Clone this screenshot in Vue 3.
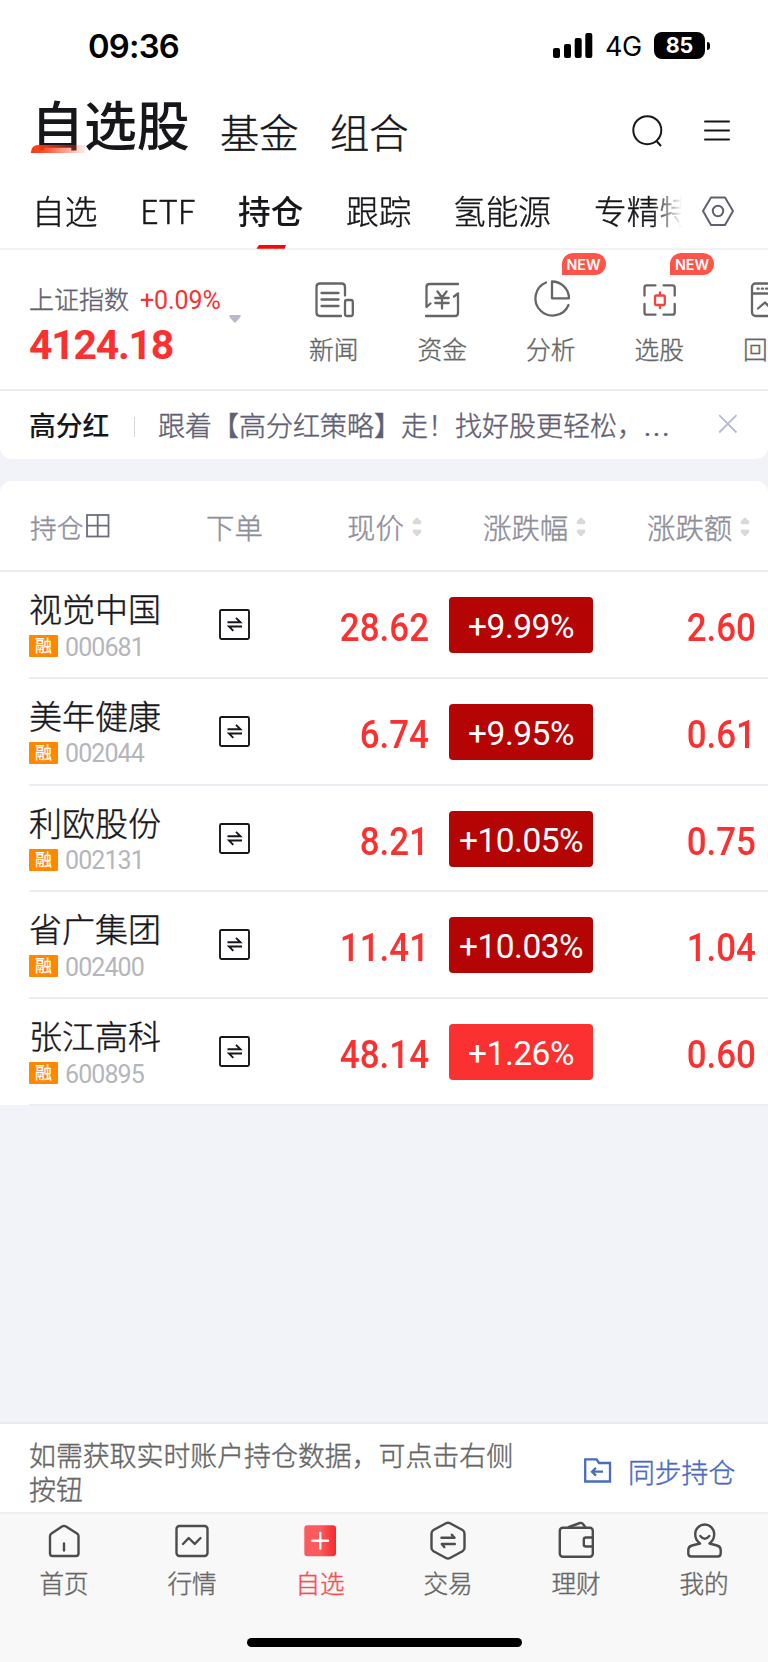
<script setup>
const tabs = [
  { name: '自选', w: 108 },
  { name: 'ETF', w: 98 },
  { name: '持仓', w: 108, active: true },
  { name: '跟踪', w: 107 },
  { name: '氢能源', w: 141 },
  { name: '专精特', w: 140 },
]
const tools = [
  { name: '新闻', icon: 'news' },
  { name: '资金', icon: 'fund' },
  { name: '分析', icon: 'pie', isNew: true },
  { name: '选股', icon: 'pick', isNew: true },
  { name: '回测', icon: 'test' },
]
const stocks = [
  { name: '视觉中国', code: '000681', price: '28.62', pct: '+9.99%', chg: '2.60', limit: true },
  { name: '美年健康', code: '002044', price: '6.74', pct: '+9.95%', chg: '0.61', limit: true },
  { name: '利欧股份', code: '002131', price: '8.21', pct: '+10.05%', chg: '0.75', limit: true },
  { name: '省广集团', code: '002400', price: '11.41', pct: '+10.03%', chg: '1.04', limit: true },
  { name: '张江高科', code: '600895', price: '48.14', pct: '+1.26%', chg: '0.60', limit: false },
]
const nav = [
  { name: '首页', icon: 'home' },
  { name: '行情', icon: 'market' },
  { name: '自选', icon: 'watch', active: true },
  { name: '交易', icon: 'trade' },
  { name: '理财', icon: 'wallet' },
  { name: '我的', icon: 'me' },
]
</script>

<template>
  <div class="page">
    <div class="status">
      <span class="time">09:36</span>
      <svg class="signal" width="40" height="26" viewBox="0 0 40 26">
        <rect x="0" y="15" width="7" height="10" rx="2" />
        <rect x="11" y="11" width="7" height="14" rx="2" />
        <rect x="21.7" y="5" width="7" height="20" rx="2" />
        <rect x="32.3" y="0" width="7" height="25" rx="2" />
      </svg>
      <span class="net">4G</span>
      <span class="battery">85</span>
      <span class="nub"></span>
    </div>

    <header class="head">
      <div class="title"><span class="swash"></span>自选股</div>
      <div class="sub thin">基金</div>
      <div class="sub thin">组合</div>
      <svg class="search" width="34" height="36" viewBox="630 113 34 36" fill="none" stroke="#17171b" stroke-width="2">
        <circle cx="647.3" cy="130.2" r="14" />
        <path d="M656.5 141l4.5 5" />
      </svg>
      <svg width="28" height="24" viewBox="703 119 28 24" stroke="#17171b" stroke-width="2" stroke-linecap="round">
        <path d="M705 121.5h24M705 130.5h24M705 139.5h24" />
      </svg>
    </header>

    <div class="tabs">
      <div class="tablist">
        <div v-for="t in tabs" :key="t.name" class="tab thin" :class="{ on: t.active }" :style="{ width: t.w + 'px' }">
          <span>{{ t.name }}</span>
          <svg v-if="t.active" class="ind" width="30" height="4" viewBox="0 0 30 4"><path d="M3 0H30L28.5 3.7H0.5Z" fill="#fb0505" /></svg>
        </div>
      </div>
      <svg width="34" height="32" viewBox="701 195 34 32" fill="none" stroke="#5f6173" stroke-width="2" stroke-linejoin="round">
        <path d="M711 197.5h14l8 13.5-8 14h-14l-8-14z" />
        <circle cx="718" cy="211" r="5.2" />
      </svg>
    </div>

    <div class="market">
      <div class="index">
        <div class="idx-top"><span class="idx-name thin">上证指数</span><span class="idx-pct">+0.09%</span></div>
        <div class="idx-val">4124.18</div>
      </div>
      <svg class="caret" width="14" height="10" viewBox="0 0 14 10"><path d="M2 1H12Q13.500 1.500 12.500 3L8.200 8Q7 9.200 5.800 8L1.500 3Q0.500 1.500 2 1Z" fill="#b9bacb" /></svg>
      <div class="tools">
        <div v-for="t in tools" :key="t.name" class="tool">
          <span v-if="t.isNew" class="new">NEW</span>
          <svg v-if="t.icon === 'news'" width="44" height="40" viewBox="312 280 44 40">
            <path d="M345 295.500V287Q345 283.500 341.500 283.500H320Q316.500 283.500 316.500 287V312.500Q316.500 316 320 316H341" />
            <path d="M321.500 293H338.500M321.500 299.500H338.500M321.500 306H338.500" />
            <rect x="345" y="300" width="7.800" height="16" rx="2" />
          </svg>
          <svg v-else-if="t.icon === 'fund'" width="44" height="40" viewBox="420.500 280 44 40">
            <path d="M458.500 284H430Q427 284 427 287V307L431 303.500M426.500 316H455.500Q458.500 316 458.500 313V293.500L454.500 296.500" />
            <path d="M438 291.500L442.500 297.500L447 291.500M435.800 298H449.200M435.800 303H449.200M442.500 297.500V308.500" />
          </svg>
          <svg v-else-if="t.icon === 'pie'" width="44" height="40" viewBox="528.500 280 44 40">
            <path d="M545.500 282.500A17.200 17.200 0 1 0 568 305M551.500 281.500V298.300H568.500A17 17 0 0 0 551.500 281.500Z" />
          </svg>
          <svg v-else-if="t.icon === 'pick'" width="44" height="40" viewBox="637.500 280 44 40">
            <path d="M645 295.500V287.500Q645 285.300 647.200 285.300H656M664 285.300H673Q675.200 285.300 675.200 287.500V295.500M675.200 304V312.500Q675.200 314.700 673 314.700H664M656 314.700H647.200Q645 314.700 645 312.500V304" />
            <path class="red" d="M657 295.500H664Q665.300 295.500 665.300 297V303.500Q665.300 305 664 305H657Q655.500 305 655.500 303.500V297Q655.500 295.500 657 295.500ZM660.400 292.500V295.500M660.400 305V308" />
          </svg>
          <svg v-else width="44" height="40" viewBox="745.500 280 44 40">
            <rect x="751.500" y="283.500" width="33" height="32.500" rx="3.500" />
            <path d="M751.500 293.500H784" />
            <path d="M757 288.700h1.200M761.300 288.700h1.200M765.500 288.700h1.200" />
            <path d="M757.500 308.500L764.500 302.500L768.500 306.500L776 300" />
          </svg>
          <div class="tool-name thin">{{ t.name }}</div>
        </div>
      </div>
    </div>

    <div class="notice">
      <b>高分红</b><i></i><p class="thin">跟着【高分红策略】走！找好股更轻松，<span>...</span></p>
      <svg width="20" height="20" viewBox="0 0 20 20" fill="none" stroke="#b9bacb" stroke-width="1.800"><path d="M1.200 1.200L18.500 18.500M18.500 1.200L1.200 18.500" /></svg>
    </div>

    <section class="panel">
      <div class="thead thin">
        <div class="th c1">持仓<svg width="24" height="24" viewBox="0 0 24 24" fill="none" stroke="#6c6e80" stroke-width="1.800"><rect x="1" y="1" width="21.500" height="21.500" /><path d="M11.700 1V22.500M1 11.700H22.500" /></svg></div>
        <div class="th c2">下单</div>
        <div v-for="(h, i) in ['现价', '涨跌幅', '涨跌额']" :key="h" class="th" :class="'n' + i">{{ h }}<svg width="10" height="20" viewBox="0 0 10 20" fill="#d9d9d9"><path d="M4 1Q5 0 6 1L9 4Q10 6 8.500 7.300H1.500Q0 6 1 4ZM4 18.700Q5 19.700 6 18.700L9 15.500Q10 13.700 8.500 12.400H1.500Q0 13.700 1 15.500Z" /></svg></div>
      </div>
      <div v-for="s in stocks" :key="s.code" class="row">
        <div class="who">
          <div class="name thin">{{ s.name }}</div>
          <div class="meta"><span class="rz">融</span><span class="code">{{ s.code }}</span></div>
        </div>
        <svg class="order" width="31" height="31" viewBox="219 609 31 31" fill="none" stroke="#17171b" stroke-width="1.900">
          <rect x="220" y="610" width="29" height="29" rx="1.500" />
          <path d="M227.500 622.300H240.500L236 617.800M242 626.500H229L233.300 630.800" />
        </svg>
        <div class="price num">{{ s.price }}</div>
        <div class="pct" :class="{ limit: s.limit }">{{ s.pct }}</div>
        <div class="chg num">{{ s.chg }}</div>
      </div>
    </section>

    <div class="spacer"></div>

    <div class="sync thin">
      <p>如需获取实时账户持仓数据，可点击右侧按钮</p>
      <svg width="28" height="27" viewBox="584 1457 28 27" fill="none" stroke="#4a6cc0" stroke-width="2.3">
        <path d="M585.200 1459.300H596.500L599 1463H610V1481.500H585.200Z" />
        <path d="M592 1471.700H603M596 1467.800L592 1471.700L596 1475.600" />
      </svg>
      <span>同步持仓</span>
    </div>

    <nav class="nav">
      <div v-for="n in nav" :key="n.name" class="item" :class="{ on: n.active }">
        <svg v-if="n.icon === 'home'" width="44" height="44" viewBox="42.500 1518 44 44">
          <path d="M50.500 1536Q50.500 1534.500 52 1533.500L62.500 1526.500Q64.500 1525.300 66.500 1526.500L77.500 1533.500Q79 1534.500 79 1536V1553.500Q79 1556 76.500 1556H53Q50.500 1556 50.500 1553.500Z" /><path d="M64.500 1543.500V1550.500" />
        </svg>
        <svg v-else-if="n.icon === 'market'" width="44" height="44" viewBox="170.500 1518 44 44">
          <rect x="177" y="1526" width="31" height="30" rx="3" /><path d="M183.500 1544L189.200 1538L195.200 1544L201 1538" />
        </svg>
        <svg v-else-if="n.icon === 'watch'" width="44" height="44" viewBox="298 1518 44 44">
          <defs><linearGradient id="wg"><stop offset=".5" stop-color="#fb5b5f" /><stop offset="1" stop-color="#f3292d" /></linearGradient></defs>
          <rect x="304.300" y="1525.300" width="31.700" height="31" rx="3" fill="url(#wg)" stroke="none" /><path d="M312.500 1540.700H328M320.200 1533V1548.500" stroke="#fff" />
        </svg>
        <svg v-else-if="n.icon === 'trade'" width="44" height="44" viewBox="426 1518 44 44">
          <path d="M446 1523.300Q448 1522.200 450 1523.300L462.500 1530Q464.500 1531.200 464.500 1533.500V1548Q464.500 1550 462.500 1551.200L450 1558Q448 1559.200 446 1558L433.500 1551.200Q431.500 1550 431.500 1548V1533.500Q431.500 1531.200 433.500 1530Z" />
          <path d="M441.500 1537.800H454.500L451.800 1534.700M454.800 1544H441.800L444.300 1547" />
        </svg>
        <svg v-else-if="n.icon === 'wallet'" width="44" height="44" viewBox="554 1518 44 44">
          <rect x="559.800" y="1527.800" width="33" height="29" rx="3" /><path d="M569 1527L580 1523Q582 1522.500 583 1524L585.500 1527.500M592.800 1537.500H586Q583.800 1537.500 583.800 1539.500V1544.500Q583.800 1546.500 586 1546.500H592.800" />
        </svg>
        <svg v-else width="44" height="44" viewBox="682 1518 44 44">
          <path d="M700 1543.500C696.500 1541 695.200 1537 695.200 1534A9.500 9.500 0 0 1 714.200 1534C714.200 1537 713 1541 709.500 1543.500L717 1545.500Q720.700 1546.500 720.700 1550V1553.500Q720.700 1556.500 717.500 1556.500H691.500Q688.300 1556.500 688.300 1553.500V1550Q688.300 1546.500 692 1545.500L700 1543.500" />
          <path d="M700.300 1536Q704.800 1541.500 709.300 1536" />
        </svg>
        <div class="thin">{{ n.name }}</div>
      </div>
    </nav>
    <div class="home"><span></span></div>
  </div>
</template>

<style>
body { background: #f2f3f9; }
</style>

<style scoped>
* { box-sizing: border-box; margin: 0; }
svg { flex: none; display: block; }
.page { width: 768px; height: 1662px; overflow: hidden; display: flex; flex-direction: column; background: #f2f3f9; font-family: "Noto Sans CJK SC", sans-serif; font-weight: 300; color: #17171b; white-space: nowrap; }
.thin { font-weight: 300; -webkit-text-stroke: .4px currentColor; }
.status { height: 92px; background: #fff; display: flex; align-items: center; padding-left: 87px; font-family: Inter, sans-serif; font-weight: 400; color: #000; }
.time { width: 466px; font-size: 32.8px; font-weight: 600; line-height: 40px; letter-spacing: -.8px; padding-left: 1px; }
.signal { margin-right: 12px; }
.net { width: 49px; font-size: 27px; line-height: 32px; letter-spacing: -.5px; padding-top: 2px; }
.battery { width: 51px; height: 27px; border-radius: 8px; background: #000; color: #fff; font-size: 21.5px; font-weight: 700; line-height: 27px; text-align: center; margin-top: -1px; }
.nub { width: 3px; height: 8px; margin-left: 2px; background: #000; border-radius: 0 4px 4px 0; }
.head { height: 80px; background: #fff; display: flex; align-items: flex-start; padding-left: 31px; }
.title { position: relative; width: 189px; font-size: 52.9px; font-weight: 500; line-height: 62px; }
.swash { position: absolute; left: 0; top: 53px; width: 54px; height: 8px; border-radius: 7px 0 0 0; background: linear-gradient(90deg, #ff3408, rgba(255, 60, 20, .85) 30%, rgba(255, 90, 50, .1)); }
.sub { width: 110px; font-size: 39.3px; line-height: 50px; padding-top: 14px; }
.search { margin: 21px 39px 0 190px; }
.search + svg { margin-top: 27px; }
.tabs { height: 78px; background: #fff; border-bottom: 2px solid #f1f2f5; display: flex; align-items: flex-start; }
.tablist { width: 683px; height: 77px; padding-left: 32px; display: flex; overflow: hidden; -webkit-mask-image: linear-gradient(90deg, #000 652px, transparent 682px); mask-image: linear-gradient(90deg, #000 652px, transparent 682px); }
.tabs > svg { margin: 23px 0 0 18px; }
.tab { position: relative; flex: none; font-size: 32.7px; line-height: 44px; padding-top: 16px; }
.tab.on { font-weight: 500; -webkit-text-stroke: 0; }
.ind { position: absolute; left: 18px; top: 73px; }
.market { height: 141px; background: #fff; border-bottom: 2px solid #ececf3; display: flex; overflow: hidden; }
.index { width: 199px; padding: 30px 0 0 29px; flex: none; }
.idx-top { display: flex; height: 36px; line-height: 36px; }
.idx-name { width: 111px; flex: none; font-size: 25px; color: #5f6173; }
.idx-pct { font: 25px/42px Roboto, sans-serif; color: #fb3030; letter-spacing: -.1px; }
.idx-val { font: 700 41px/48px Roboto, sans-serif; color: #fb3030; letter-spacing: -1.3px; padding-top: 5px; }
.caret { margin: 64px 37.5px 0 29px; }
.tools { display: flex; flex: none; }
.tool { position: relative; width: 108.5px; display: flex; flex-direction: column; align-items: center; padding-top: 30px; }
.tool svg { fill: none; stroke: #666; stroke-width: 2.3; stroke-linecap: round; stroke-linejoin: round; }
.tool .red { stroke: #fb4040; }
.tool-name { font-size: 24.7px; line-height: 36px; color: #666; margin-top: 10px; }
.new { position: absolute; left: 65px; top: 3px; width: 44px; height: 22px; border-radius: 11px 11px 11px 0; background: #ff5449; color: #fff; font: 600 14.3px/24px Inter, sans-serif; text-align: center; }
.notice { height: 68px; background: #fff; border-radius: 0 0 12px 12px; display: flex; align-items: center; padding: 0 0 2px 29px; }
.notice b { width: 105px; font-size: 26.8px; font-weight: 500; }
.notice i { width: 1px; height: 20px; background: #d8d8de; margin-right: 23px; margin-top: 5px; }
.notice p { width: 560px; font-size: 27px; color: #5f6173; }
.notice p span { font-family: Roboto, sans-serif; font-weight: 400; letter-spacing: 2px; }
.panel { margin-top: 22px; height: 624px; background: #fff; border-radius: 12px 12px 0 0; flex: none; }
.thead { height: 91px; border-bottom: 2px solid #ececf3; display: flex; align-items: center; padding: 2px 0 0 30px; color: #8e8f9b; font-size: 28.4px; line-height: 40px; }
.th { display: flex; align-items: center; }
.c1 { width: 176px; font-size: 26.7px; gap: 3px; }
.c1 svg { margin-top: -1px; }
.c2 { width: 141px; }
.n0, .n1, .n2 { gap: 8px; }
.n0 { width: 136px; }
.n1 { width: 164px; }
.row { height: 106.75px; display: flex; align-items: flex-start; position: relative; margin-left: 29px; border-bottom: 2px solid #ececf3; }
.who { width: 190px; padding-top: 13px; }
.name { font-size: 33px; line-height: 46px; }
.meta { display: flex; align-items: center; margin-top: 3px; height: 24px; }
.rz { width: 29px; height: 22px; background: #ff8800; border-radius: 1px; color: #fff; font-size: 17px; font-weight: 500; line-height: 20px; text-align: center; }
.code { font: 25px/28px Roboto, sans-serif; color: #b5b6bb; margin-left: 7px; letter-spacing: -.9px; padding-top: 3px; }
.order { margin-top: 37px; }
.num { font: 500 38px/44px Roboto, sans-serif; color: #fb3030; text-align: right; padding-top: 34px; transform: scaleX(.92); transform-origin: right; }
.price { width: 179px; }
.pct { width: 144px; height: 56px; margin: 25px 0 0 20px; border-radius: 4px; background: #fb3030; color: #fff; font: 33.5px/60px Roboto, sans-serif; letter-spacing: -.5px; text-align: center; }
.pct.limit { background: #b50404; }
.chg { width: 163px; }
.spacer { flex: 1; }
.sync { height: 90px; background: #fff; border-top: 2px solid #e9eaf1; display: flex; padding: 14px 0 0 29px; flex: none; }
.sync p { width: 501px; font-size: 26.9px; line-height: 34px; color: #666; white-space: normal; }
.sync svg { margin: 19px 16px 0 54px; }
.sync span { font-size: 26.8px; line-height: 40px; color: #4a6cc0; margin-top: 14px; }
.nav { height: 98px; flex: none; background: #f8f8f8; border-top: 2px solid #efeff0; display: flex; }
.item { width: 128px; display: flex; flex-direction: column; align-items: center; padding-top: 4px; font-size: 24.6px; line-height: 36px; color: #666; }
.item div { margin-top: 2px; }
.item svg { fill: none; stroke: #4c4c4c; stroke-width: 2.4; stroke-linecap: round; stroke-linejoin: round; }
.item.on { color: #fb4c50; }
.home { height: 52px; flex: none; background: #f8f8f8; padding: 28px 0 0 247px; }
.home span { display: block; width: 275px; height: 9px; border-radius: 5px; background: #000; }
</style>
